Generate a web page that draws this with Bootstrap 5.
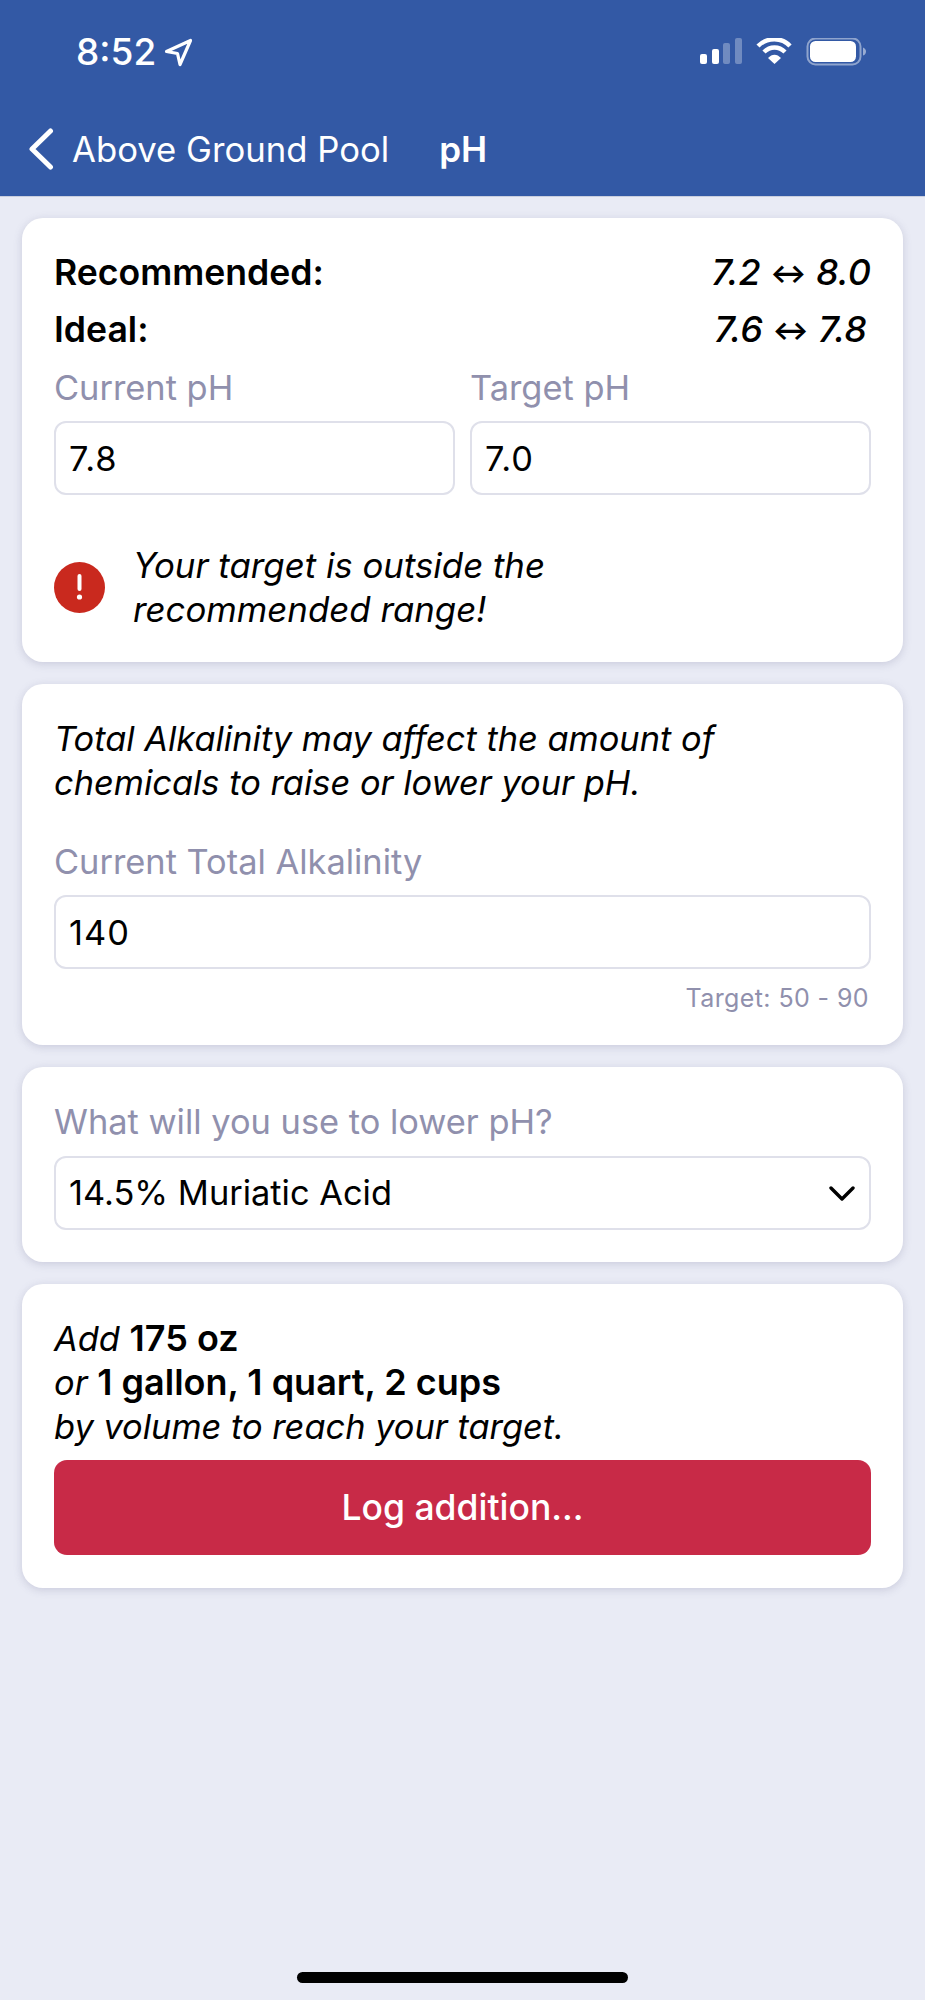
<!DOCTYPE html>
<html lang="en">
<head>
<meta charset="utf-8">
<title>pH</title>
<link rel="stylesheet" href="https://cdn.jsdelivr.net/npm/bootstrap@5.3.0/dist/css/bootstrap.min.css">
<style>
html,body{height:2000px;}
body{background:#e9ebf5;font-family:Inter,"Liberation Sans",sans-serif;font-size:34.4px;line-height:44px;color:#000;overflow:hidden;}
.app-header{background:#3359a5;height:197px;color:#fff;border-bottom:1px solid #c9cede;}
.status-row{height:127px;padding:30px 59px 0 76px;}
.clock{font-size:37px;font-weight:500;line-height:44px;}
.status-icons{margin-top:8px;}
.nav-row{padding-left:28px;gap:18px;height:44px;}
.back-label{font-size:34.7px;}
.page-name{font-weight:600;margin-left:32px;font-size:35px;}
.sheet{width:881px;margin-left:22px;padding-top:21px;gap:22px;}
.panel{border:0;border-radius:21px;box-shadow:0 2px 8px rgba(90,90,130,.22);}
.panel .card-body{padding:0 32px;}
.range-top{padding-top:26px;}
.range-line{height:57px;line-height:57px;font-weight:600;font-size:35.6px;}
.range-val{font-style:italic;font-weight:500;font-size:36px;}
.arrow-glyph{font-style:normal;font-size:27px;font-weight:700;vertical-align:2px;}
.field-label{color:#9090ad;line-height:44px;}
.form-control.field-box,.form-select.field-box{height:74px;border:2.5px solid #dfe0ea;border-radius:12px;font-size:34.4px;line-height:44px;color:#000;padding:0 13px;box-shadow:none;}
.form-control.field-box{letter-spacing:1px;}
.form-select.field-box{margin-bottom:32px;background-position:right 14px center;background-size:26px 15px;background-image:url("data:image/svg+xml,%3csvg xmlns='http://www.w3.org/2000/svg' viewBox='0 0 26 15'%3e%3cpath fill='none' stroke='%23000' stroke-width='3.4' stroke-linecap='round' stroke-linejoin='round' d='M2 2l11 11L24 2'/%3e%3c/svg%3e");}
.inputs-row{margin-top:8px;gap:15px;}
.inputs-row .field-label{margin-bottom:11px;}
.warn-row{gap:28px;margin-top:48px;padding-bottom:31px;}
.warn-text{font-style:italic;line-height:44px;font-size:34.8px;}
.intro-copy{padding-top:33px;}
.alk-label{margin-top:35px;margin-bottom:11px;}
.hint-text{font-size:25px;line-height:30px;color:#9090ad;letter-spacing:.4px;margin-top:14px;padding-bottom:32px;padding-right:2px;}
.use-label{padding-top:33px;margin-bottom:12px;}
.result-copy{padding-top:33px;padding-bottom:11px;}
.log-btn{height:95px;background:#c82a47;border:0;border-radius:13px;font-size:35.5px;font-weight:500;color:#fff;margin-bottom:33px;}
.home-bar{left:297px;top:1972px;width:331px;height:11px;background:#000;border-radius:6px;}
.em-line{font-style:italic;}
.em-line b{font-style:normal;font-weight:600;font-size:36px;line-height:1;}
</style>
</head>
<body>
<div class="app-header">
  <div class="status-row d-flex align-items-start justify-content-between">
    <div class="d-flex align-items-center gap-2">
      <span class="clock">8:52</span>
      <svg width="29" height="29" viewBox="0 0 29 29" aria-hidden="true"><path d="M2.500 13.500 26.500 2.500 16 26.500 13.500 15.500Z" fill="none" stroke="#fff" stroke-width="3.200" stroke-linejoin="round"/></svg>
    </div>
    <svg class="status-icons" width="166" height="30" viewBox="0 0 166 30" aria-hidden="true">
      <rect x="0" y="16" width="7" height="10" rx="2" fill="#fff"/>
      <rect x="12" y="11" width="7" height="15" rx="2" fill="#fff"/>
      <rect x="23" y="5" width="7" height="21" rx="2" fill="#fff" opacity=".3"/>
      <rect x="35" y="0" width="7" height="26" rx="2" fill="#fff" opacity=".3"/>
      <g fill="none" stroke="#fff" stroke-width="4.400">
        <path d="M58 8C67 -1 82 -1 90 8"/>
        <path d="M64 14C70 8 79 8 85 14"/>
      </g>
      <path d="M68 20C72 15.500 77 15.500 81 20L74.500 26Z" fill="#fff"/>
      <rect x="107.500" y="0.500" width="53" height="26" rx="8" fill="none" stroke="#fff" stroke-opacity=".45" stroke-width="2"/>
      <rect x="110" y="3" width="46" height="21" rx="5.500" fill="#fff"/>
      <path d="M163 9.500C165 10 166 12 166 13.500S165 17 163 17.500Z" fill="#fff" fill-opacity=".5"/>
    </svg>
  </div>
  <div class="nav-row d-flex align-items-center">
    <svg width="26" height="42" viewBox="0 0 26 42" aria-hidden="true"><path d="M22.500 3 4 21l18.500 18" fill="none" stroke="#fff" stroke-width="5" stroke-linecap="round" stroke-linejoin="round"/></svg>
    <span class="back-label">Above Ground Pool</span>
    <span class="page-name">pH</span>
  </div>
</div>

<main class="sheet d-flex flex-column">
  <section class="card panel">
    <div class="card-body">
      <div class="range-top"></div>
      <div class="range-line d-flex justify-content-between"><span>Recommended:</span><span class="range-val">7.2 <span class="arrow-glyph">↔</span> 8.0</span></div>
      <div class="range-line d-flex justify-content-between"><span>Ideal:</span><span class="range-val pe-1">7.6 <span class="arrow-glyph">↔</span> 7.8</span></div>
      <div class="d-flex inputs-row">
        <div class="flex-fill w-50"><label class="field-label d-block">Current pH</label><input class="form-control field-box" value="7.8"></div>
        <div class="flex-fill w-50"><label class="field-label d-block">Target pH</label><input class="form-control field-box" value="7.0"></div>
      </div>
      <div class="d-flex align-items-center warn-row">
        <svg class="flex-shrink-0" width="51" height="51" viewBox="0 0 51 51" aria-hidden="true"><circle cx="25.500" cy="25.500" r="25.500" fill="#c9291e"/><rect x="23.500" y="12" width="4" height="17" rx="2" fill="#fff"/><circle cx="25.500" cy="35" r="2.600" fill="#fff"/></svg>
        <div class="warn-text">Your target is outside the<br>recommended range!</div>
      </div>
    </div>
  </section>

  <section class="card panel">
    <div class="card-body">
      <p class="em-line m-0 intro-copy">Total Alkalinity may affect the amount of<br>chemicals to raise or lower your pH.</p>
      <label class="field-label d-block alk-label">Current Total Alkalinity</label>
      <input class="form-control field-box" value="140">
      <div class="hint-text text-end">Target: 50 - 90</div>
    </div>
  </section>

  <section class="card panel">
    <div class="card-body">
      <label class="field-label d-block use-label">What will you use to lower pH?</label>
      <select class="form-select field-box"><option>14.5% Muriatic Acid</option></select>
    </div>
  </section>

  <section class="card panel">
    <div class="card-body">
      <p class="em-line m-0 result-copy">Add <b>175 oz</b><br>or <b>1 gallon, 1 quart, 2 cups</b><br>by volume to reach your target.</p>
      <button class="btn log-btn w-100" type="button">Log addition...</button>
    </div>
  </section>
</main>
<div class="home-bar position-absolute"></div>
<script src="https://cdn.jsdelivr.net/npm/bootstrap@5.3.0/dist/js/bootstrap.bundle.min.js"></script>
</body>
</html>
